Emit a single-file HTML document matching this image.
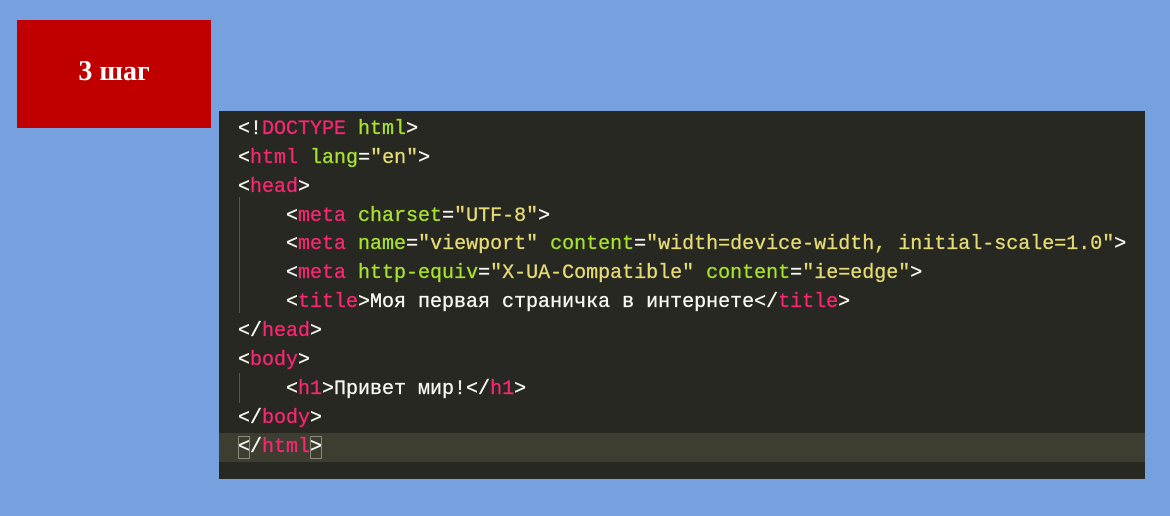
<!DOCTYPE html>
<html><head><meta charset="utf-8"><style>
body{margin:0;width:1170px;height:516px;background:#76a1de;position:relative;overflow:hidden}
.box{position:absolute;left:17px;top:20px;width:194px;height:108px;background:#c00000;color:#fff;font:bold 28px "Liberation Serif","Noto Serif CJK SC",serif;display:flex;align-items:center;justify-content:center;padding-bottom:4px;box-sizing:border-box}
.code{position:absolute;left:219px;top:111px;width:926px;height:368px;background:#272822}
.l{position:absolute;left:19px;font:20px/28px "Liberation Mono","DejaVu Sans Mono",monospace;color:#f8f8f2;white-space:pre;-webkit-text-stroke:0.3px currentColor}
.t{color:#f92672}.a{color:#a6e22e}.s{color:#e6db74}.g{color:#f8f8f2}
.hl{position:absolute;left:0;right:0;top:322px;height:29px;background:#3e3d32}
.guide{position:absolute;left:20px;width:1px;background:#555}
.br{outline:1px solid #8a8a7a;outline-offset:-1px}
</style></head><body>
<div class="box">3 шаг</div>
<div class="code">
<div class="hl"></div>
<div class="guide" style="top:86px;height:116px"></div>
<div class="guide" style="top:262px;height:30px"></div>
<div class="l" style="top:5px">&lt;!<span class="t">DOCTYPE</span> <span class="a">html</span>&gt;</div>
<div class="l" style="top:34px">&lt;<span class="t">html</span> <span class="a">lang</span>=<span class="s">"en"</span>&gt;</div>
<div class="l" style="top:63px">&lt;<span class="t">head</span>&gt;</div>
<div class="l" style="top:92px">    &lt;<span class="t">meta</span> <span class="a">charset</span>=<span class="s">"UTF-8"</span>&gt;</div>
<div class="l" style="top:120px">    &lt;<span class="t">meta</span> <span class="a">name</span>=<span class="s">"viewport"</span> <span class="a">content</span>=<span class="s">"width=device-width, initial-scale=1.0"</span>&gt;</div>
<div class="l" style="top:149px">    &lt;<span class="t">meta</span> <span class="a">http-equiv</span>=<span class="s">"X-UA-Compatible"</span> <span class="a">content</span>=<span class="s">"ie=edge"</span>&gt;</div>
<div class="l" style="top:178px">    &lt;<span class="t">title</span>&gt;Моя первая страничка в интернете&lt;/<span class="t">title</span>&gt;</div>
<div class="l" style="top:207px">&lt;/<span class="t">head</span>&gt;</div>
<div class="l" style="top:236px">&lt;<span class="t">body</span>&gt;</div>
<div class="l" style="top:265px">    &lt;<span class="t">h1</span>&gt;Привет мир!&lt;/<span class="t">h1</span>&gt;</div>
<div class="l" style="top:294px">&lt;/<span class="t">body</span>&gt;</div>
<div class="l" style="top:323px"><span class="br">&lt;</span>/<span class="t">html</span><span class="br">&gt;</span></div>
</div>
</body></html>
